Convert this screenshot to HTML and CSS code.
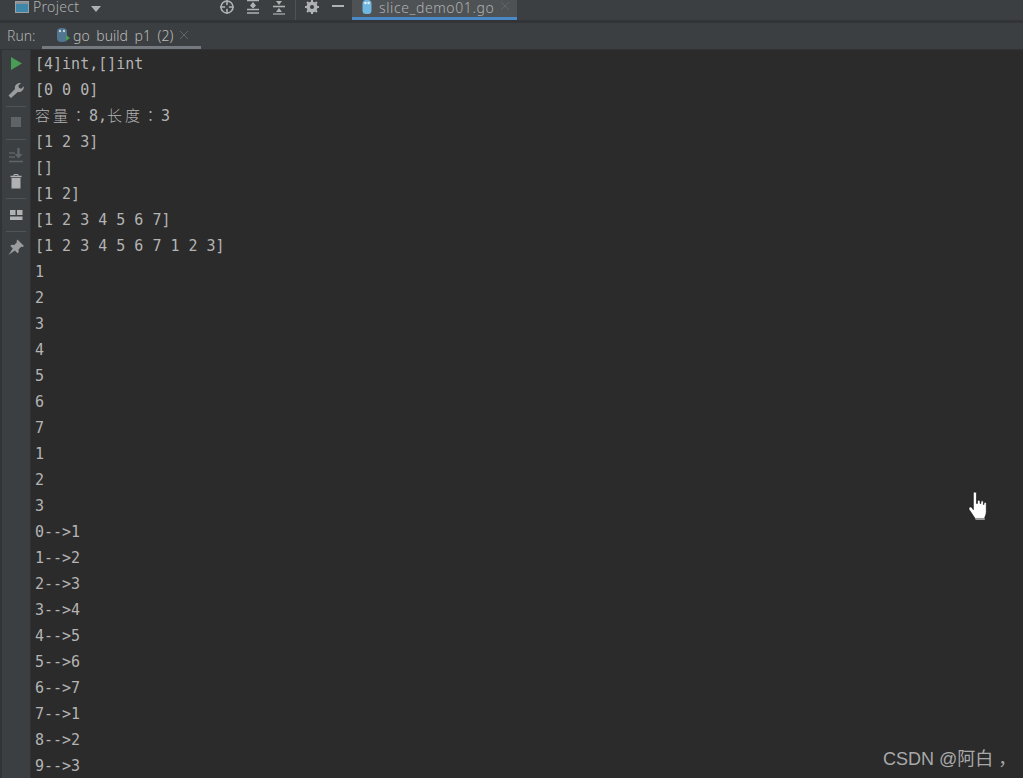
FILE: index.html
```html
<!DOCTYPE html>
<html lang="en">
<head>
<meta charset="utf-8">
<title>Run console</title>
<link rel="stylesheet" href="styles.css">
</head>
<body>
<div class="app">
  <header class="topbar">
    <div class="project">
      <svg class="ico16" viewBox="0 0 14 14"><rect x="0.5" y="1.5" width="13" height="11" fill="#3f87a8" stroke="#9aa0a3"/><rect x="1" y="2" width="12" height="2" fill="#8a9094"/></svg>
      <span>Project</span>
      <svg class="caret" viewBox="0 0 10 6"><path d="M0 0h10L5 6z" fill="#afb1b3"/></svg>
    </div>
    <div class="tools">
      <svg class="tool" viewBox="0 0 16 16"><circle cx="8" cy="8" r="6" fill="none" stroke="#afb1b3" stroke-width="1.6"/><path d="M8 1v14M1 8h14" stroke="#afb1b3" stroke-width="1.6"/><circle cx="8" cy="8" r="2" fill="#3c3f41"/></svg>
      <svg class="tool" viewBox="0 0 16 16"><path d="M2 1.500h12M2 14h12M2 10.500h12" stroke="#afb1b3" stroke-width="1.600"/><path d="M8 3l3 3.500H5zM8 9.500L5 6.500h6z" fill="#afb1b3"/></svg>
      <svg class="tool last" viewBox="0 0 16 16"><path d="M2 7.500h12" stroke="#afb1b3" stroke-width="1.600"/><path d="M8 6L5 2h6zM8 9l3 4H5z" fill="#afb1b3"/><path d="M2 15h12" stroke="#afb1b3" stroke-width="1.200"/></svg>
      <i class="vsep"></i>
      <svg class="tool gear" viewBox="0 0 16 16"><circle cx="8" cy="8" r="4" fill="none" stroke="#afb1b3" stroke-width="3"/><path d="M8 1v14M1 8h14M3 3l10 10M13 3L3 13" stroke="#afb1b3" stroke-width="2"/><circle cx="8" cy="8" r="2" fill="#3c3f41"/></svg>
      <svg class="tool minus" viewBox="0 0 12 2"><path d="M0 1h12" stroke="#afb1b3" stroke-width="2"/></svg>
    </div>
    <div class="filetab">
      <svg class="gopher" viewBox="0 0 10 14"><rect x="0.500" y="0" width="9" height="14" rx="3.500" fill="#6fb6e0"/><circle cx="3.400" cy="3" r="1.300" fill="#e6eef2"/><circle cx="6.600" cy="3" r="1.300" fill="#e6eef2"/></svg>
      <span class="name">slice_demo01.go</span>
      <svg class="close" viewBox="0 0 8 8"><path d="M0 0l8 8M8 0L0 8" stroke="#5f6467" stroke-width="1"/></svg>
    </div>
  </header>
  <div class="runbar">
    <span class="runlabel">Run:</span>
    <div class="runtab">
      <svg class="gopher small" viewBox="0 0 13 14"><rect x="0" y="0" width="10" height="14" rx="4" fill="#4f7590"/><circle cx="3" cy="3" r="1.200" fill="#c6d3da"/><circle cx="7" cy="3" r="1.200" fill="#c6d3da"/><path d="M9 7l4 3-4 3z" fill="#499c54"/></svg>
      <span class="runname">go build p1 (2)</span>
      <svg class="close" viewBox="0 0 8 8"><path d="M0 0l8 8M8 0L0 8" stroke="#5f6467" stroke-width="1"/></svg>
    </div>
  </div>
  <div class="body">
    <aside class="side">
      <svg class="sico i-run" viewBox="0 0 16 16"><path d="M3 2l11 6.500L3 15z" fill="#499c54"/></svg>
      <svg class="sico i-wrench" viewBox="0 0 16 16"><path d="M0.500 13.500l6.500-6.500c-.8-3 1.500-6.500 6-6l-2.700 2.800.8 2.200 2.200.8 2.500-2.500c.5 3.800-2.500 6.500-6 5.700L3 16z" fill="#9a9c9e"/></svg>
      <i class="hsep s1"></i>
      <i class="stop"></i>
      <i class="hsep s2"></i>
      <svg class="sico i-down" viewBox="0 0 16 16"><path d="M1 6h6M1 10h6M1 14.500h14" stroke="#5f6366" stroke-width="1.600"/><path d="M10.500 1v7" stroke="#5f6366" stroke-width="2.400"/><path d="M6.500 7h8l-4 4.500z" fill="#5f6366"/></svg>
      <svg class="sico i-trash" viewBox="0 0 16 16"><path d="M2.500 3.500h11" stroke="#afb1b3" stroke-width="1.500"/><path d="M6 3V1.500h4V3" fill="none" stroke="#afb1b3"/><path d="M3.500 5h9v10.500h-9z" fill="#afb1b3"/></svg>
      <i class="hsep s3"></i>
      <svg class="sico i-layout" viewBox="0 0 16 16"><path d="M2 3h5.500v5H2zM9 3h5.500v5H9zM2 9.500h12.500V13H2z" fill="#afb1b3"/></svg>
      <i class="hsep s4"></i>
      <svg class="sico i-pin" viewBox="0 0 16 16"><path d="M9.500 0.500L16 7l-1.500 1-1.300-.3-2.700 2.700.3 2.600-1.300 1.300-2.700-2.700L0.500 16l4.300-6.500-2.500-2.500L3.600 5.700l2.600.3 2.700-2.700-.3-1.300z" fill="#9a9c9e"/></svg>
    </aside>
    <main class="console"><div class="line">[4]int,[]int</div><div class="line">[0 0 0]</div><div class="line"><span class="cjk">容量：</span>8,<span class="cjk">长度：</span>3</div><div class="line">[1 2 3]</div><div class="line">[]</div><div class="line">[1 2]</div><div class="line">[1 2 3 4 5 6 7]</div><div class="line">[1 2 3 4 5 6 7 1 2 3]</div><div class="line">1</div><div class="line">2</div><div class="line">3</div><div class="line">4</div><div class="line">5</div><div class="line">6</div><div class="line">7</div><div class="line">1</div><div class="line">2</div><div class="line">3</div><div class="line">0--&gt;1</div><div class="line">1--&gt;2</div><div class="line">2--&gt;3</div><div class="line">3--&gt;4</div><div class="line">4--&gt;5</div><div class="line">5--&gt;6</div><div class="line">6--&gt;7</div><div class="line">7--&gt;1</div><div class="line">8--&gt;2</div><div class="line">9--&gt;3</div></main>
  </div>
  <svg class="cursor" viewBox="0 0 20 28"><path d="M6 2.500c0-2 3-2 3 0V12h1v-2c0-1.500 2.500-1.500 2.500 0v2h.8v-1.500c0-1.500 2.400-1.500 2.400 0V13h.6v-1c0-1.500 2.200-1.500 2.200 0v8c0 3-1.500 5-2 7H8l-6-9c-1-2 1-3.500 2.500-2L6 18z" fill="#fff" stroke="#111" stroke-width=".6"/><path d="M8 26h9v2H8z" fill="#9a9a9a"/></svg>
  <div class="watermark">CSDN @阿白 ，</div>
</div>
</body>
</html>
```
FILE: styles.css
```css
* { box-sizing: border-box; }
html, body { margin: 0; height: 100%; overflow: hidden; background: #2b2b2b; }
.app { position: relative; width: 1023px; height: 778px; display: flex; flex-direction: column; overflow: hidden; font-family: "Noto Sans", "Liberation Sans", sans-serif; color: #bbbbbb; }
.topbar { height: 20px; flex: none; display: flex; align-items: center; background: #3c3f41; }
.project { width: 219px; display: flex; align-items: center; padding-left: 15px; font-size: 14px; font-weight: 300; color: #afb1b3; }
.ico16 { width: 14px; height: 14px; margin-right: 4px; margin-top: -6px; }
.project span { margin-top: -8px; letter-spacing: .3px; }
.caret { width: 10px; height: 6px; margin-left: 12px; margin-top: -2px; }
.tools { display: flex; align-items: center; height: 20px; }
.tool { width: 16px; height: 16px; margin-right: 10px; margin-top: -6px; flex: none; }
.tool.last { margin-right: 8px; }
.vsep { width: 1px; height: 20px; background: #505254; margin-right: 8px; }
.tool.gear { margin-right: 12px; }
.tool.minus { width: 12px; height: 2px; margin-top: -8px; margin-right: 8px; }
.filetab { width: 165px; height: 20px; display: flex; align-items: center; background: #4e5254; border-bottom: 3px solid #4a88c7; padding-left: 10px; font-size: 14px; color: #afb1b3; }
.gopher { width: 10px; height: 14px; margin-right: 7px; margin-top: -3px; flex: none; }
.name { font-weight: 300; margin-top: -3px; letter-spacing: .6px; }
.filetab .close { width: 8px; height: 8px; margin-left: 7px; margin-top: -6px; }
.runbar { height: 30px; flex: none; display: flex; align-items: stretch; background: #3c3f41; border-top: 3px solid #323437; border-bottom: 1px solid #323232; }
.runlabel { width: 42px; padding-left: 7px; font-size: 14px; font-weight: 300; line-height: 26px; color: #afb1b3; }
.runtab { width: 159px; height: 26px; display: flex; align-items: center; padding-left: 15px; border-bottom: 3px solid #747a80; font-size: 14px; font-weight: 300; color: #bbbbbb; }
.runtab .small { width: 13px; height: 14px; margin-right: 3px; margin-top: 1px; }
.runname { word-spacing: 3px; margin-top: 1px; }
.runtab .close { width: 8px; height: 8px; margin-left: 7px; margin-top: 1px; }
.body { flex: 1; display: flex; min-height: 0; }
.side { width: 31px; flex: none; display: flex; flex-direction: column; align-items: center; padding-top: 5px; background: #3c3f41; border-left: 2px solid #313335; border-right: 1px solid #323232; }
.sico { width: 16px; height: 16px; flex: none; display: block; }
.hsep { width: 20px; height: 1px; background: #515354; flex: none; }
.stop { width: 10px; height: 10px; background: #5f6366; flex: none; margin-top: 10px; }
.i-wrench { margin-top: 11px; }
.s1 { margin-top: 8px; }
.s2 { margin-top: 12px; }
.i-down { margin-top: 7px; }
.i-trash { margin-top: 10px; }
.s3 { margin-top: 9px; }
.i-layout { margin-top: 8px; }
.s4 { margin-top: 8px; }
.i-pin { margin-top: 7px; }
.console { flex: 1; padding: 1px 0 0 4px; font-family: "DejaVu Sans Mono", "Noto Sans CJK SC", monospace; font-size: 15px; line-height: 26px; color: #b4b4b4; background: #2b2b2b; }
.line { height: 26px; white-space: pre; }
.cjk { font-family: "Noto Sans CJK TC", "Noto Sans CJK SC", sans-serif; letter-spacing: 3px; font-weight: 300; line-height: 1; }
.cursor { position: absolute; left: 967px; top: 491px; width: 21px; height: 29px; }
.watermark { position: absolute; left: 883px; top: 747px; font-family: "Liberation Sans", "Noto Sans CJK SC", sans-serif; font-size: 18px; line-height: 24px; color: #a9a9a9; white-space: nowrap; }
```
